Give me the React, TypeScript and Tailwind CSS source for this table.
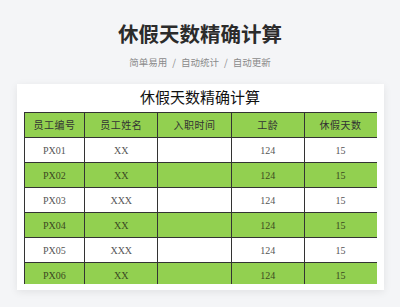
import React from "react";

const rows = [
  { id: "PX01", name: "XX", green: false },
  { id: "PX02", name: "XX", green: true },
  { id: "PX03", name: "XXX", green: false },
  { id: "PX04", name: "XX", green: true },
  { id: "PX05", name: "XXX", green: false },
  { id: "PX06", name: "XX", green: true },
];

const serif = "font-['Liberation_Serif','Noto_Sans_CJK_SC',serif]";

export default function App() {
  return (
    <div className="w-[400px] h-[307px] overflow-hidden bg-[#f4f5f7] flex flex-col items-center font-['Noto_Sans_CJK_SC',sans-serif]">
      <h1 className="mt-[17px] text-[20.5px] leading-[32px] font-bold text-[#2b2b2b]">休假天数精确计算</h1>
      <div className="mt-[6px] text-[9.5px] leading-[14px] text-[#8a8a8a] flex gap-[5px]">
        <span>简单易用</span>
        <span>/</span>
        <span>自动统计</span>
        <span>/</span>
        <span>自动更新</span>
      </div>
      <div className="mt-[15px] w-[367px] h-[206px] bg-white shadow-[0_2px_8px_rgba(0,0,0,0.08)] flex flex-col px-[7px] overflow-hidden">
        <div className={`h-[28px] flex items-center justify-center text-[15px] text-[#111] ${serif}`}>休假天数精确计算</div>
        <div className="h-[172px] overflow-hidden">
          <table className={`w-[354px] border-collapse text-[10px] ${serif}`}>
            <colgroup>
              <col className="w-[61px]" />
              <col className="w-[73px]" />
              <col className="w-[74px]" />
              <col className="w-[73px]" />
              <col className="w-[73px]" />
            </colgroup>
            <thead>
              <tr className="h-[25px] bg-[#92d050] text-[#333] text-[10px]">
                {["员工编号", "员工姓名", "入职时间", "工龄", "休假天数"].map((h) => (
                  <th key={h} className="border border-[#333] font-normal text-center p-0 tracking-[0.5px]">{h}</th>
                ))}
              </tr>
            </thead>
            <tbody>
              {rows.map((r) => (
                <tr key={r.id} className={`h-[25px] ${r.green ? "bg-[#92d050] text-[#3b4a22]" : "bg-white text-[#555]"}`}>
                  <td className="border border-[#333] text-center p-0">{r.id}</td>
                  <td className="border border-[#333] text-center p-0">{r.name}</td>
                  <td className="border border-[#333] text-center p-0"></td>
                  <td className="border border-[#333] text-center p-0">124</td>
                  <td className="border border-[#333] text-center p-0">15</td>
                </tr>
              ))}
            </tbody>
          </table>
        </div>
      </div>
    </div>
  );
}
